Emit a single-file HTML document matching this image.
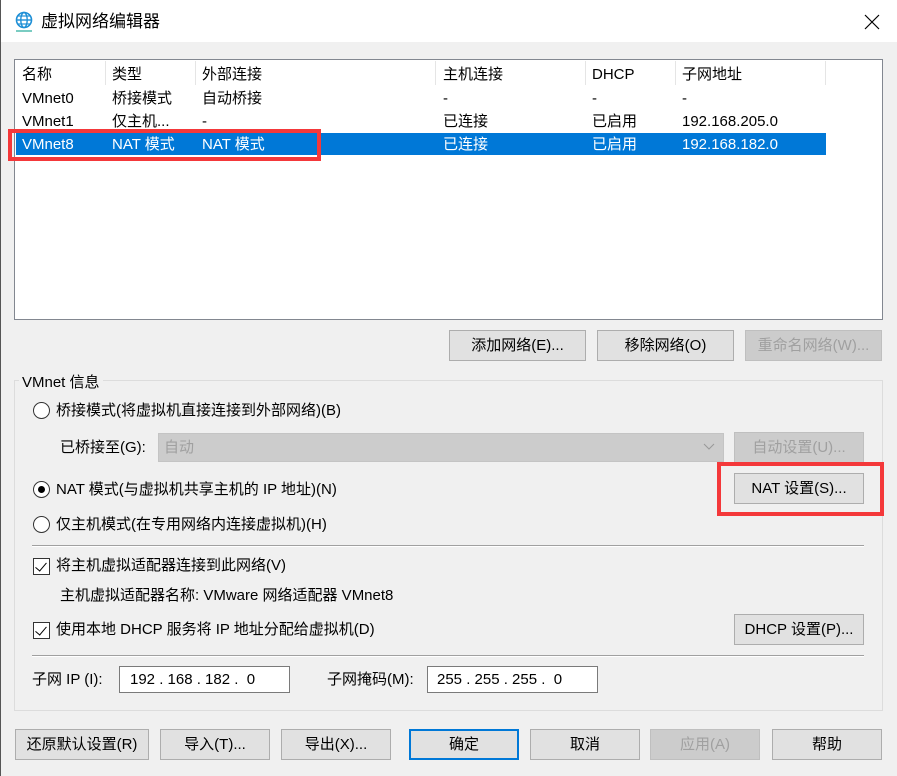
<!DOCTYPE html>
<html><head><meta charset="utf-8"><style>
*{box-sizing:border-box;margin:0;padding:0}
body{width:897px;height:776px;overflow:hidden;background:#f0f0f0;font-family:"Liberation Sans","Noto Sans CJK SC",sans-serif;font-size:15px;color:#000;position:relative}
.a{position:absolute;white-space:nowrap;line-height:20px}
.btn{position:absolute;background:#e1e1e1;border:1px solid #adadad;text-align:center;line-height:30px;white-space:nowrap}
.dis{color:#a0a0a0;background:#ccc;border-color:#bfbfbf}
.radio{position:absolute;width:17px;height:17px;border:1px solid #333;border-radius:50%;background:#fff}
.chk{position:absolute;width:17px;height:17px;border:1px solid #333;background:#fff}
.chk:after{content:"";position:absolute;left:4px;top:1px;width:5px;height:10px;border:solid #000;border-width:0 1.5px 1.5px 0;transform:rotate(40deg)}
.red{position:absolute;border:4px solid #f4383a}
</style></head><body>
<div style="position:absolute;left:0;top:0;width:897px;height:42px;background:#fff"></div>
<div style="position:absolute;left:0;top:0;width:1px;height:776px;background:#555"></div>
<svg class="a" style="left:14px;top:11px" width="20" height="22" viewBox="0 0 20 22"><circle cx="10" cy="9" r="7.5" fill="none" stroke="#1e8fd6" stroke-width="1.6"/><ellipse cx="10" cy="9" rx="3.2" ry="7.5" fill="none" stroke="#1e8fd6" stroke-width="1.4"/><line x1="2.5" y1="9" x2="17.5" y2="9" stroke="#1e8fd6" stroke-width="1.4"/><line x1="4" y1="5" x2="16" y2="5" stroke="#1e8fd6" stroke-width="1.2"/><line x1="4" y1="13" x2="16" y2="13" stroke="#1e8fd6" stroke-width="1.2"/><line x1="2" y1="20" x2="18" y2="20" stroke="#2a9" stroke-width="1.2"/></svg>
<div class="a" style="left:41px;top:12px;font-size:17px">虚拟网络编辑器</div>
<svg style="position:absolute;left:864px;top:14px" width="16" height="16"><path d="M1 1L15 15M15 1L1 15" stroke="#000" stroke-width="1.2"/></svg>

<div style="position:absolute;left:14px;top:59px;width:869px;height:261px;background:#fff;border:1px solid #828790"></div>
<div class="a" style="left:22px;top:65px">名称</div><div class="a" style="left:112px;top:65px">类型</div><div class="a" style="left:202px;top:65px">外部连接</div><div class="a" style="left:443px;top:65px">主机连接</div><div class="a" style="left:592px;top:65px">DHCP</div><div class="a" style="left:682px;top:65px">子网地址</div>
<div style="position:absolute;left:105px;top:61px;width:1px;height:24px;background:#e5e5e5"></div>
<div style="position:absolute;left:195px;top:61px;width:1px;height:24px;background:#e5e5e5"></div>
<div style="position:absolute;left:435px;top:61px;width:1px;height:24px;background:#e5e5e5"></div>
<div style="position:absolute;left:585px;top:61px;width:1px;height:24px;background:#e5e5e5"></div>
<div style="position:absolute;left:675px;top:61px;width:1px;height:24px;background:#e5e5e5"></div>
<div style="position:absolute;left:825px;top:61px;width:1px;height:24px;background:#e5e5e5"></div>
<div class="a" style="left:22px;top:89px">VMnet0</div><div class="a" style="left:112px;top:89px">桥接模式</div><div class="a" style="left:202px;top:89px">自动桥接</div><div class="a" style="left:443px;top:89px">-</div><div class="a" style="left:592px;top:89px">-</div><div class="a" style="left:682px;top:89px">-</div>
<div class="a" style="left:22px;top:112px">VMnet1</div><div class="a" style="left:112px;top:112px">仅主机...</div><div class="a" style="left:202px;top:112px">-</div><div class="a" style="left:443px;top:112px">已连接</div><div class="a" style="left:592px;top:112px">已启用</div><div class="a" style="left:682px;top:112px">192.168.205.0</div>
<div style="position:absolute;left:16px;top:133px;width:810px;height:22px;background:#0078d7"></div>
<div style="color:#fff"><div class="a" style="left:22px;top:135px">VMnet8</div><div class="a" style="left:112px;top:135px">NAT 模式</div><div class="a" style="left:202px;top:135px">NAT 模式</div><div class="a" style="left:443px;top:135px">已连接</div><div class="a" style="left:592px;top:135px">已启用</div><div class="a" style="left:682px;top:135px">192.168.182.0</div></div>
<div class="red" style="left:8px;top:129px;width:313px;height:32px"></div>

<div class="btn" style="left:449px;top:330px;width:137px;height:31px">添加网络(E)...</div>
<div class="btn" style="left:597px;top:330px;width:137px;height:31px">移除网络(O)</div>
<div class="btn dis" style="left:745px;top:330px;width:137px;height:31px">重命名网络(W)...</div>

<div style="position:absolute;left:14px;top:380px;width:869px;height:331px;border:1px solid #dcdcdc"></div>
<div class="a" style="left:19px;top:373px;background:#f0f0f0;padding:0 3px">VMnet 信息</div>
<div class="radio" style="left:33px;top:402px"></div><div class="a" style="left:56px;top:401px">桥接模式(将虚拟机直接连接到外部网络)(B)</div>
<div class="a" style="left:60px;top:438px">已桥接至(G):</div>
<div style="position:absolute;left:158px;top:433px;width:566px;height:29px;background:#ccc;border:1px solid #c4c4c4"></div>
<div class="a" style="left:164px;top:438px;color:#a0a0a0">自动</div>
<svg style="position:absolute;left:703px;top:443px" width="12" height="8"><path d="M1 1L6 6L11 1" fill="none" stroke="#999" stroke-width="1"/></svg>
<div class="btn dis" style="left:734px;top:432px;width:130px;height:31px">自动设置(U)...</div>
<div class="radio" style="left:33px;top:481px"></div><div style="position:absolute;left:38px;top:486px;width:7px;height:7px;border-radius:50%;background:#000"></div>
<div class="a" style="left:56px;top:480px">NAT 模式(与虚拟机共享主机的 IP 地址)(N)</div>
<div class="btn" style="left:734px;top:473px;width:130px;height:31px">NAT 设置(S)...</div>
<div class="red" style="left:717px;top:462px;width:167px;height:54px"></div>
<div class="radio" style="left:33px;top:516px"></div><div class="a" style="left:56px;top:515px">仅主机模式(在专用网络内连接虚拟机)(H)</div>
<div style="position:absolute;left:32px;top:545px;width:832px;height:1px;background:#a0a0a0"></div><div style="position:absolute;left:32px;top:546px;width:832px;height:1px;background:#fff"></div>
<div class="chk" style="left:33px;top:558px"></div><div class="a" style="left:56px;top:556px">将主机虚拟适配器连接到此网络(V)</div>
<div class="a" style="left:60px;top:586px">主机虚拟适配器名称: VMware 网络适配器 VMnet8</div>
<div class="chk" style="left:33px;top:622px"></div><div class="a" style="left:56px;top:620px">使用本地 DHCP 服务将 IP 地址分配给虚拟机(D)</div>
<div class="btn" style="left:734px;top:614px;width:130px;height:31px">DHCP 设置(P)...</div>
<div style="position:absolute;left:32px;top:655px;width:832px;height:1px;background:#a0a0a0"></div><div style="position:absolute;left:32px;top:656px;width:832px;height:1px;background:#fff"></div>
<div class="a" style="left:32px;top:670px">子网 IP (I):</div>
<div style="position:absolute;left:119px;top:666px;width:171px;height:27px;background:#fff;border:1px solid #7a7a7a"></div>
<div class="a" style="left:130px;top:670px">192 . 168 . 182 .&nbsp; 0</div>
<div class="a" style="left:327px;top:670px">子网掩码(M):</div>
<div style="position:absolute;left:427px;top:666px;width:171px;height:27px;background:#fff;border:1px solid #7a7a7a"></div>
<div class="a" style="left:437px;top:670px">255 . 255 . 255 .&nbsp; 0</div>

<div class="btn" style="left:15px;top:729px;width:134px;height:31px">还原默认设置(R)</div>
<div class="btn" style="left:160px;top:729px;width:110px;height:31px">导入(T)...</div>
<div class="btn" style="left:281px;top:729px;width:110px;height:31px">导出(X)...</div>
<div class="btn" style="left:409px;top:729px;width:110px;height:31px;border:2px solid #0078d7;line-height:28px">确定</div>
<div class="btn" style="left:530px;top:729px;width:110px;height:31px">取消</div>
<div class="btn dis" style="left:650px;top:729px;width:110px;height:31px">应用(A)</div>
<div class="btn" style="left:772px;top:729px;width:110px;height:31px">帮助</div>
</body></html>
